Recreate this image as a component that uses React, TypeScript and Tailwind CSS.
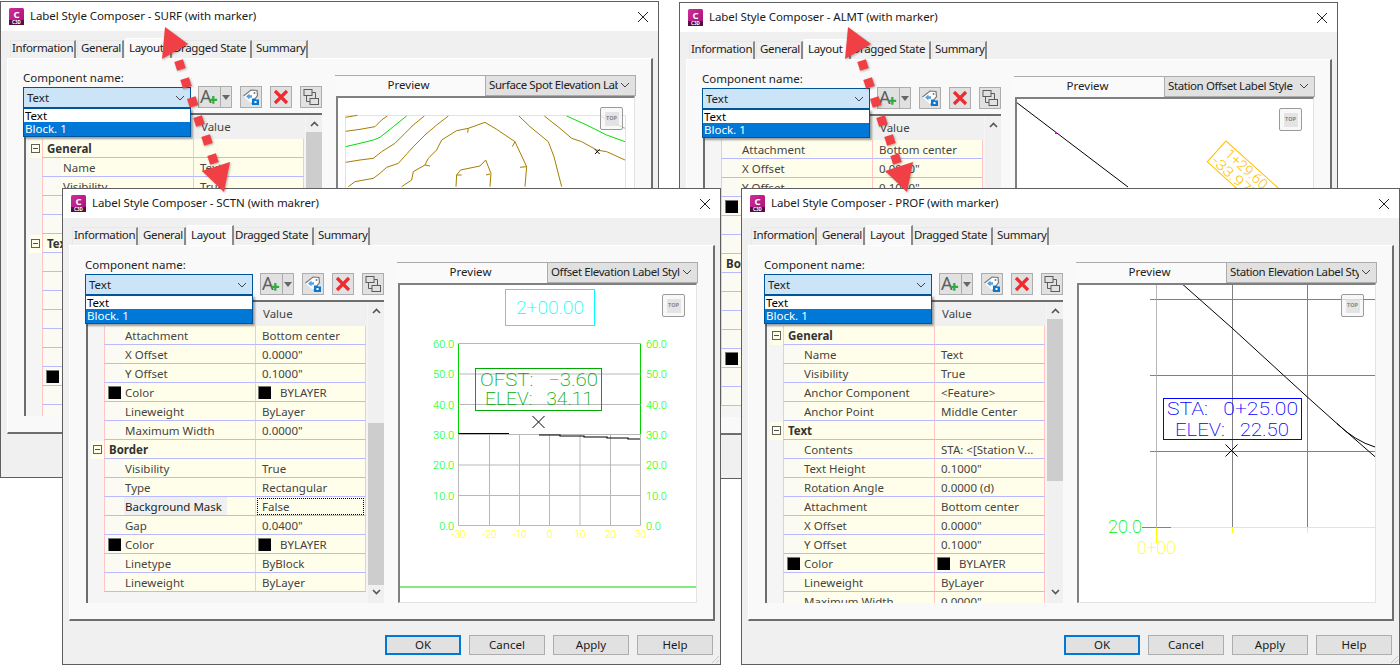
import type { ReactNode } from 'react';

const FONT = "font-['Noto_Sans',sans-serif]";

type Row = { name: string; value?: string; group?: boolean; swatch?: boolean; active?: boolean };

const generalRows: Row[] = [
  { name: 'General', group: true },
  { name: 'Name', value: 'Text' },
  { name: 'Visibility', value: 'True' },
  { name: 'Anchor Component', value: '<Feature>' },
  { name: 'Anchor Point', value: 'Middle Center' },
  { name: 'Text', group: true },
  { name: 'Contents', value: 'STA: <[Station V...' },
  { name: 'Text Height', value: '0.1000"' },
  { name: 'Rotation Angle', value: '0.0000 (d)' },
  { name: 'Attachment', value: 'Bottom center' },
  { name: 'X Offset', value: '0.0000"' },
  { name: 'Y Offset', value: '0.1000"' },
  { name: 'Color', value: 'BYLAYER', swatch: true },
  { name: 'Lineweight', value: 'ByLayer' },
  { name: 'Maximum Width', value: '0.0000"' },
];

const borderRows: Row[] = [
  { name: 'Attachment', value: 'Bottom center' },
  { name: 'X Offset', value: '0.0000"' },
  { name: 'Y Offset', value: '0.1000"' },
  { name: 'Color', value: 'BYLAYER', swatch: true },
  { name: 'Lineweight', value: 'ByLayer' },
  { name: 'Maximum Width', value: '0.0000"' },
  { name: 'Border', group: true },
  { name: 'Visibility', value: 'True' },
  { name: 'Type', value: 'Rectangular' },
  { name: 'Background Mask', value: 'False', active: true },
  { name: 'Gap', value: '0.0400"' },
  { name: 'Color', value: 'BYLAYER', swatch: true },
  { name: 'Linetype', value: 'ByBlock' },
  { name: 'Lineweight', value: 'ByLayer' },
];

function AppIcon() {
  return (
    <svg width="15" height="17" viewBox="0 0 15 17" className="shrink-0">
      <defs>
        <linearGradient id="c3d" x1="0" y1="0" x2="1" y2="1">
          <stop offset="0" stopColor="#d42a98" />
          <stop offset="1" stopColor="#a01478" />
        </linearGradient>
      </defs>
      <rect width="15" height="17" rx="1.5" fill="url(#c3d)" />
      <rect y="12" width="15" height="5" fill="#5a0c45" />
      <text x="7.5" y="9.5" textAnchor="middle" fontSize="9.5" fontWeight="700" fill="#fff" fontFamily="Noto Sans, sans-serif">C</text>
      <text x="7.5" y="16.2" textAnchor="middle" fontSize="4.5" fontWeight="700" fill="#fff" fontFamily="Noto Sans, sans-serif">C3D</text>
    </svg>
  );
}

function Chevron() {
  return (
    <svg width="10" height="6" viewBox="0 0 10 6" className="shrink-0">
      <path d="M1 1l4 4 4-4" fill="none" stroke="#444" strokeWidth="1" />
    </svg>
  );
}

function ToolButtons() {
  return (
    <>
      <div className="ml-[7px] flex h-[22px] w-[34px] border border-[#adadad] bg-[#e1e1e1]">
        <svg width="22" height="20" viewBox="0 0 22 20" className="border-r border-[#adadad]">
          <text x="1" y="16" fontSize="19" fill="#5f5f5f" fontFamily="Noto Sans, sans-serif">A</text>
          <path d="M15 9v8M11 13h8" stroke="#2fae3f" strokeWidth="2.4" />
        </svg>
        <svg width="10" height="20" viewBox="0 0 10 20">
          <path d="M1 8h8l-4 5z" fill="#666" />
        </svg>
      </div>
      <div className="ml-[8px] h-[22px] w-[22px] border border-[#adadad] bg-[#e1e1e1]">
        <svg width="20" height="20" viewBox="0 0 20 20">
          <path d="M2.5 9l7.5-6 6 .5.5 5-6 8" fill="#fff" stroke="#777" strokeWidth="1.2" />
          <circle cx="13.5" cy="6" r="1" fill="#777" />
          <path d="M5 9.5l3.5-3v1.8h2.5v2.4H8.5v1.8z" fill="#5aa0dc" />
          <path d="M11 11.5h3l1 1h3v5.5h-7z" fill="#0a78d0" />
          <rect x="13.5" y="14" width="2" height="2" fill="#fff" />
        </svg>
      </div>
      <div className="ml-[8px] h-[22px] w-[22px] border border-[#adadad] bg-[#e1e1e1]">
        <svg width="20" height="20" viewBox="0 0 20 20">
          <path d="M4 4l12 12M16 4L4 16" stroke="#ee2b2f" strokeWidth="3.2" />
        </svg>
      </div>
      <div className="ml-[8px] h-[22px] w-[22px] border border-[#adadad] bg-[#e1e1e1]">
        <svg width="20" height="20" viewBox="0 0 20 20">
          <rect x="3" y="2.5" width="8" height="6" fill="none" stroke="#5c5c5c" />
          <rect x="9" y="11.5" width="8.5" height="6" fill="none" stroke="#5c5c5c" />
          <path d="M5.5 8.5v6H9M11 5.5h3.5v6" fill="none" stroke="#5c5c5c" />
        </svg>
      </div>
    </>
  );
}

function PropRow({ row }: { row: Row }) {
  return (
    <div className="flex h-[19px] shrink-0 text-[#444]">
      <div className="flex w-[16px] shrink-0 items-center justify-end">
        {row.group && (
          <div className="flex h-[18px] w-[13px] items-center justify-center bg-[#fffeeb]">
            <div className="flex h-[9px] w-[9px] items-center justify-center border border-[#606060]">
              <div className="h-px w-[5px] bg-[#505050]" />
            </div>
          </div>
        )}
      </div>
      <div className="flex w-[152px] shrink-0 border-x border-b border-x-[#ffc4c4] border-b-[#b9b9ff] bg-[#fffeeb] leading-[20px]">
        {row.group ? (
          <span className="pl-[4px] font-bold text-[#333]">{row.name}</span>
        ) : (
          <>
            <div className="flex w-[18px] shrink-0 items-center justify-center bg-[#fbfbf4]">
              {row.swatch && <div className="h-[13px] w-[13px] border-t border-l border-[#777] bg-black" />}
            </div>
            <span className={row.active ? 'ml-[1px] w-[103px] bg-[#f0f0f0] pl-[1px] text-[#222]' : 'pl-[2px]'}>{row.name}</span>
          </>
        )}
      </div>
      <div className="flex w-[110px] shrink-0 items-center border-r border-b border-r-[#ffc4c4] border-b-[#b9b9ff] bg-[#fffeeb]">
        {row.swatch && <div className="ml-[2px] h-[13px] w-[13px] shrink-0 border-t border-l border-[#777] bg-black" />}
        {row.active ? (
          <span className="mx-px block h-[17px] w-full border border-dotted border-black pl-[4px] leading-[16px]">{row.value}</span>
        ) : (
          <span className={row.swatch ? 'ml-[9px] whitespace-nowrap pt-[2px] leading-[16px]' : 'ml-[6px] whitespace-nowrap pt-[2px] leading-[16px]'}>{row.value}</span>
        )}
      </div>
    </div>
  );
}

function PropGrid({ rows, thumbBottom }: { rows: Row[]; thumbBottom?: boolean }) {
  return (
    <div className="mt-[5px] ml-px flex h-[303px] w-[298px] overflow-hidden border-t-2 border-l-2 border-t-[#6d6d6d] border-l-[#6d6d6d] bg-[#f5f5f5]">
      <div className="w-[279px] shrink-0 overflow-hidden">
        <div className="flex h-[24px] items-center bg-[#f0f0f0] pl-[175px] text-[#444]">Value</div>
        {rows.map((r, i) => (
          <PropRow key={i} row={r} />
        ))}
      </div>
      <div className="ml-px flex w-[17px] shrink-0 flex-col bg-[#f0f0f0]">
        <div className="flex h-[17px] items-center justify-center">
          <svg width="9" height="6" viewBox="0 0 9 6"><path d="M1 5l3.5-3.5L8 5" fill="none" stroke="#555" strokeWidth="1.6" /></svg>
        </div>
        <div className={`flex h-[266px] flex-col ${thumbBottom ? 'justify-end' : 'justify-start'}`}>
          <div className="h-[162px] bg-[#cdcdcd]" />
        </div>
        <div className="flex h-[14px] items-center justify-center">
          <svg width="9" height="6" viewBox="0 0 9 6"><path d="M1 1l3.5 3.5L8 1" fill="none" stroke="#555" strokeWidth="1.6" /></svg>
        </div>
      </div>
    </div>
  );
}

function CadText({ x, y, w, size, fill, anchor, children }: { x: number; y: number; w?: number; size: number; fill: string; anchor?: 'start' | 'middle' | 'end'; children: string }) {
  return (
    <text x={x} y={y} fontSize={size} fill={fill} textAnchor={anchor ?? 'start'} textLength={w} lengthAdjust="spacingAndGlyphs" style={{ fontFamily: 'Roboto, sans-serif', fontWeight: size > 14 ? 200 : 300, whiteSpace: 'pre' }}>
      {children}
    </text>
  );
}

function Marker({ x, y }: { x: number; y: number }) {
  return <path d={`M${x - 6} ${y - 6}L${x + 6} ${y + 6}M${x + 6} ${y - 6}L${x - 6} ${y + 6}`} stroke="#000" fill="none" />;
}

function SurfPreview() {
  const brown = '#a67c00';
  const contours = [
    '47,172 70,168 82,166',
    '47,214 90,208 135,200 155,180 172,168',
    '47,307 90,300 130,295 155,275 195,250 225,220 250,195 283,168',
    '55,380 75,365 130,355 150,340 170,322 205,310 232,280 250,260 285,225 320,195 355,168',
    '215,380 245,360 250,335 285,315 295,295 320,270 335,240 380,212 415,205 465,187 500,208 555,245 590,320 585,380',
    '413,218 415,205',
    '285,315 300,318',
    '547,260 555,245',
    '570,322 590,320',
    '378,380 380,345 392,330 450,318 467,300 483,340 480,380',
    '380,345 395,345',
    '468,345 480,342',
    '567,168 600,200 655,245 672,290 695,380',
    '643,168 690,205 725,235 755,245 800,270 830,275 885,300',
  ];
  return (
    <svg viewBox="338 98 296 317" className="block h-full w-full">
      <rect x="345.5" y="115.5" width="280" height="300" fill="none" stroke="#ffff00" />
      <g transform="translate(330 60) scale(0.3333)" fill="none" strokeWidth="3">
        {contours.map((p, i) => (
          <polyline key={i} points={p} stroke={brown} />
        ))}
        <polyline points="47,260 90,250 130,240 150,232 190,200 230,168" stroke="#00e000" />
        <polyline points="710,168 770,195 830,225 885,245" stroke="#00e000" />
        <path d="M810 168L885 205" stroke="#c89a9a" />
        <path d="M795 268L809 282M809 268L795 282" stroke="#000" />
      </g>
    </svg>
  );
}

function AlmtPreview() {
  return (
    <svg viewBox="1017 99 296 317" className="block h-full w-full">
      <path d="M1016 102L1128 187" stroke="#000" fill="none" />
      <rect x="1055" y="132" width="2" height="2" fill="#e000e0" />
      <g transform="translate(1226 141) rotate(42)">
        <rect x="0" y="0" width="82" height="28" fill="none" stroke="#ffbf00" />
        <CadText x={8} y={12} w={52} size={14} fill="#ffbf00">{'1+29.60'}</CadText>
        <CadText x={3} y={26} w={50} size={14} fill="#ffbf00">{"-33.97'"}</CadText>
      </g>
    </svg>
  );
}

function SctnPreview() {
  const ys = [343.5, 374, 404.5, 434.5, 465, 495.5, 525.5];
  const xs = [458.5, 489.5, 519.5, 549.5, 580, 610.5, 640.5];
  const labels = ['60.0', '50.0', '40.0', '30.0', '20.0', '10.0', '0.0'];
  const ticks = ['-30', '-20', '-10', '0', '10', '20', '30'];
  return (
    <svg viewBox="400 285 296 317" className="block h-full w-full">
      <rect x="505.5" y="289.5" width="89" height="36" fill="none" stroke="#00ffff" />
      <CadText x={516} y={314} w={68} size={18} fill="#00ffff">{'2+00.00'}</CadText>
      <path d="M458.5 343.5V434.5M640.5 343.5V434.5" stroke="#00d000" fill="none" />
      {ys.map((y) => (
        <path key={y} d={`M458.5 ${y}H640.5`} stroke="#b8b8b8" />
      ))}
      {xs.map((x) => (
        <path key={x} d={`M${x} 434.5V525.5`} stroke="#b8b8b8" />
      ))}
      {ys.map((y, i) => (
        <g key={labels[i]}>
          <CadText x={454} y={y + 4} size={11} fill="#00ff00" anchor="end">{labels[i]}</CadText>
          <CadText x={646} y={y + 4} size={11} fill="#00ff00">{labels[i]}</CadText>
        </g>
      ))}
      {xs.map((x, i) => (
        <CadText key={x} x={x} y={538} size={10} fill="#ffff00" anchor="middle">{ticks[i]}</CadText>
      ))}
      <rect x="475.5" y="368.5" width="126" height="42" fill="none" stroke="#00aa00" />
      <CadText x={480} y={386} w={118} size={18} fill="#00aa00">{'OFST:   \u22123.60'}</CadText>
      <CadText x={485} y={405} w={108} size={18} fill="#00aa00">{'ELEV:   34.11'}</CadText>
      <Marker x={538.5} y={422} />
      <path d="M458.5 433.5H509M539 435H560V436H584V437H607V438H628V439H640" stroke="#000" strokeWidth="1.2" fill="none" />
      <path d="M400 587H696" stroke="#00d800" />
    </svg>
  );
}

function ProfPreview() {
  return (
    <svg viewBox="1079 285 296 317" className="block h-full w-full">
      <path d="M1156.5 285V527" stroke="#b8b8b8" />
      <path d="M1232.5 285V527M1307.5 285V527M1156.5 299.5H1375M1156.5 375.5H1375M1156.5 451.5H1375" stroke="#808080" fill="none" />
      <path d="M1150 299.5h6M1150 375.5h6M1150 451.5h6M1142 527.5H1171" stroke="#00e000" fill="none" />
      <path d="M1171 527.5H1375M1156.5 527.5V543M1232.5 527.5V533M1307.5 527.5V533" stroke="#ffff00" fill="none" />
      <path d="M1182.3 284L1232 328L1283.3 375L1307 396.7L1336.7 423.3L1375 456.7M1336.7 423.3Q1355 441 1375 447" stroke="#000" fill="none" />
      <rect x="1163.5" y="398.5" width="138" height="41" fill="none" stroke="#0000ff" />
      <CadText x={1167} y={415} w={131} size={18} fill="#0000ff">{'STA:   0+25.00'}</CadText>
      <CadText x={1175} y={436} w={114} size={18} fill="#0000ff">{'ELEV:   22.50'}</CadText>
      <Marker x={1231.5} y={450.5} />
      <CadText x={1108} y={533} w={34} size={18} fill="#00ee00">{'20.0'}</CadText>
      <CadText x={1137} y={554} w={39} size={18} fill="#ffff00">{'0+00'}</CadText>
    </svg>
  );
}

function TopButton() {
  return (
    <div className="absolute top-[9px] left-[262px] flex h-[23px] w-[23px] items-center justify-center rounded-[2px] border border-[#9a9a9a] bg-[#f5f5f5]/70">
      <div className="flex h-[14px] w-[14px] items-center justify-center bg-[#dcdcdc]/70 text-[5.5px] font-bold text-[#888]">TOP</div>
    </div>
  );
}

function Dialog({ className, title, rows, thumbBottom, style: styleName, preview }: { className: string; title: string; rows: Row[]; thumbBottom?: boolean; style: string; preview: ReactNode }) {
  const tabs = [
    { label: 'Information', w: 'w-[66px]', pl: 'pl-[1px]' },
    { label: 'General', w: 'w-[47px]', pl: 'pl-[3px]' },
    { label: 'Layout', w: 'w-[47px]', pl: 'pl-[3px]', active: true },
    { label: 'Dragged State', w: 'w-[80px]', pl: 'pl-0' },
    { label: 'Summary', w: 'w-[55px]', pl: 'pl-[2px]' },
  ];
  return (
    <div className={`absolute flex h-[477px] w-[659px] flex-col border border-[#5f5f5f] bg-[#f0f0f0] text-[11.5px] ${FONT} ${className}`}>
      <div className="flex h-[29px] shrink-0 items-center bg-white pl-[8px]">
        <AppIcon />
        <span className="ml-[6px] pb-[2px] tracking-[-0.08px] text-[#1a1a1a]">{title}</span>
        <svg width="10" height="10" viewBox="0 0 10 10" className="mr-[10px] ml-auto">
          <path d="M0 0L10 10M10 0L0 10" stroke="#222" />
        </svg>
      </div>
      <div className="flex h-[27px] shrink-0 items-end pl-[9px] tracking-[-0.35px] text-[#222]">
        {tabs.map((t) =>
          t.active ? (
            <div key={t.label} className={`relative flex h-[20px] ${t.w} shrink-0 items-center border-t border-r-2 border-l border-white border-r-[#8a8a8a] bg-[#f9f9f9] pb-px ${t.pl}`}>{t.label}</div>
          ) : (
            <div key={t.label} className={`mr-px flex h-[18px] ${t.w} shrink-0 items-center border-t border-r-2 border-l border-[#e8e8e8] border-r-[#8a8a8a] bg-[#f0f0f0] pb-[3px] ${t.pl} whitespace-nowrap`}>{t.label}</div>
          ),
        )}
      </div>
      <div className="ml-[6px] flex h-[376px] w-[646px] shrink-0 border-t border-r-2 border-b-2 border-l border-t-white border-r-[#6e6e6e] border-b-[#6e6e6e] border-l-white bg-[#f9f9f9] pl-[15px]">
        <div className="w-[299px] shrink-0 text-[#222]">
          <div className="mt-[12px] h-[14px] leading-[13px]">Component name:</div>
          <div className="mt-px flex items-start">
            <div className="relative mt-px h-[21px] w-[168px] shrink-0">
              <div className="flex h-full items-center justify-between border border-[#005499] bg-[#cce4f7] pr-[5px] pl-[3px]">
                <span className="leading-[16px]">Text</span>
                <Chevron />
              </div>
              <div className="absolute top-[21px] left-0 z-10 w-[168px] border border-[#005499] bg-white shadow-[2px_2px_2px_rgba(0,0,0,0.35)]">
                <div className="h-[13px] pl-[1px] leading-[13px] text-black">Text</div>
                <div className="h-[14px] bg-[#0078d7] pl-[1px] leading-[13px] text-white">Block. 1</div>
              </div>
            </div>
            <ToolButtons />
          </div>
          <PropGrid rows={rows} thumbBottom={thumbBottom} />
        </div>
        <div className="mt-[16px] ml-[13px] w-[301px] shrink-0 text-[#222]">
          <div className="flex h-[21px]">
            <div className="flex w-[150px] items-center justify-center border-t border-[#ababab] bg-[#fafafa] pr-[3px] pb-[2px]">Preview</div>
            <div className="flex w-[151px] items-center justify-between overflow-hidden border border-[#adadad] bg-[#e1e1e1] pr-[5px] pb-[2px] pl-[3px]">
              <span className="w-[129px] overflow-hidden tracking-[-0.4px] whitespace-nowrap">{styleName}</span>
              <Chevron />
            </div>
          </div>
          <div className="relative ml-px h-[320px] w-[299px] border-t-2 border-r border-b border-l-2 border-t-[#808080] border-r-[#e3e3e3] border-b-[#e3e3e3] border-l-[#808080] bg-white">
            {preview}
            <TopButton />
          </div>
        </div>
      </div>
      <div className="mt-[14px] flex justify-end gap-2 pr-[7px] text-[#1a1a1a]">
        <div className="flex h-[20px] w-[76px] items-center justify-center border-2 border-[#0078d7] bg-[#e1e1e1]">OK</div>
        <div className="flex h-[20px] w-[76px] items-center justify-center border border-[#adadad] bg-[#e1e1e1]">Cancel</div>
        <div className="flex h-[20px] w-[76px] items-center justify-center border border-[#adadad] bg-[#e1e1e1]">Apply</div>
        <div className="flex h-[20px] w-[76px] items-center justify-center border border-[#adadad] bg-[#e1e1e1]">Help</div>
      </div>
      <svg width="12" height="12" viewBox="0 0 12 12" className="absolute right-0 bottom-0">
        <path d="M11 4L4 11M11 8L8 11" stroke="#c8c8c8" />
      </svg>
    </div>
  );
}

function Arrow({ dx }: { dx: number }) {
  const dashes = [[180, 65], [186, 83], [192.7, 102], [199, 121], [207, 140], [213, 159]];
  return (
    <g transform={`translate(${dx} 0)`}>
      <path d="M165 27L162 59L188 44Z" fill="#f04045" />
      <path d="M202 171L230 162L224 192Z" fill="#f04045" />
      {dashes.map(([x, y]) => (
        <rect key={y} x={x - 4.5} y={y - 4.5} width="9" height="9" fill="#f04045" transform={`rotate(-18 ${x} ${y})`} />
      ))}
    </g>
  );
}

export default function App() {
  return (
    <div className="relative h-[665px] w-[1400px] overflow-hidden bg-white">
      <Dialog className="top-[1px] left-0" title="Label Style Composer - SURF (with marker)" rows={generalRows} style="Surface Spot Elevation Label Style" preview={<SurfPreview />} />
      <Dialog className="top-[2px] left-[679px]" title="Label Style Composer - ALMT (with marker)" rows={borderRows} thumbBottom style="Station Offset Label Style" preview={<AlmtPreview />} />
      <Dialog className="top-[188px] left-[62px]" title="Label Style Composer - SCTN (with makrer)" rows={borderRows} thumbBottom style="Offset Elevation Label Style" preview={<SctnPreview />} />
      <Dialog className="top-[188px] left-[741px]" title="Label Style Composer - PROF (with marker)" rows={generalRows} style="Station Elevation Label Style" preview={<ProfPreview />} />
      <svg width="1400" height="665" viewBox="0 0 1400 665" className="pointer-events-none absolute top-0 left-0 z-20 drop-shadow-[1px_1px_1px_rgba(0,0,0,0.3)]">
        <Arrow dx={0} />
        <Arrow dx={683} />
      </svg>
    </div>
  );
}
